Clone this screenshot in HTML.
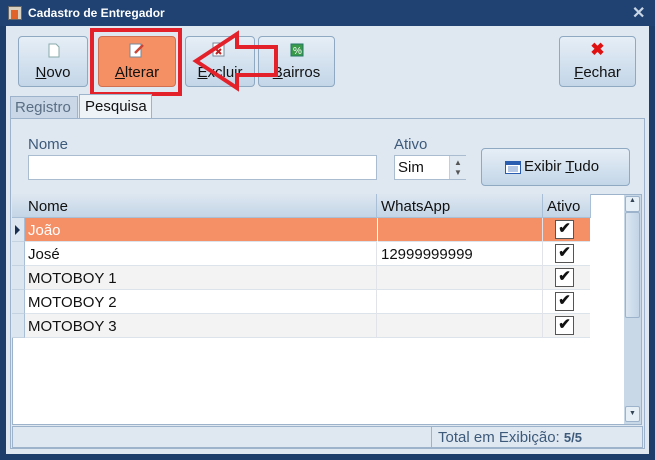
<!DOCTYPE html>
<html><head><meta charset="utf-8"><style>
*{box-sizing:border-box;margin:0;padding:0}
body{width:655px;height:460px;background:#1d3e6b;font-family:"Liberation Sans",sans-serif;position:relative;overflow:hidden}
.a{position:absolute}
.btn{position:absolute;border:1px solid #8fa9c3;border-radius:4px;background:linear-gradient(#e6eef6,#c3d6e8);font-size:15px;color:#111;text-align:center}
.btn span{position:absolute;left:0;right:0;top:27px}
.t{font-size:15px;color:#111}
.lbl{font-size:15px;color:#3d5a7a}
.row{position:absolute;left:25px;width:565px;height:24px;border-bottom:1px solid #dde3ea;font-size:15px;color:#111}
.row div{position:absolute;top:4px}
.row .cb{position:absolute;left:530px;top:2px;width:19px;height:19px;border:1px solid #555;background:#fff;font-size:15px;line-height:16px;text-align:center;font-weight:bold;color:#111}
.ind{position:absolute;left:12px;width:13px;height:24px;background:#dce6f0;border-bottom:1px solid #c5d3e1;border-right:1px solid #a9bfd5}
</style></head><body>
<div class="a" style="left:0;top:0;width:655px;height:26px;background:#1f4272"></div>
<div class="a" style="left:8px;top:6px;width:14px;height:14px;background:#d9d0c0;border:1px solid #666"></div>
<div class="a" style="left:11px;top:10px;width:7px;height:9px;background:#e2632a"></div>
<div class="a" style="left:28px;top:6px;color:#fff;font-size:12px;font-weight:bold">Cadastro de Entregador</div>
<div class="a" style="left:632px;top:3px;color:#c9d6e6;font-size:16px;font-weight:bold">✕</div>
<div class="a" style="left:6px;top:26px;width:643px;height:428px;background:#dfe8f1"></div>

<div class="btn" style="left:18px;top:36px;width:70px;height:51px"><svg class="a" style="left:29px;top:6px" width="12" height="15"><path d="M1 1h7l3 3v10H1z" fill="#fff" stroke="#8aa" /></svg><span><u>N</u>ovo</span></div>
<div class="btn" style="left:98px;top:36px;width:78px;height:51px;background:#f59065;border-color:#d07050"><svg class="a" style="left:30px;top:5px" width="16" height="16"><rect x="1" y="2" width="11" height="13" fill="#fff" stroke="#789"/><path d="M6 11l8-8" stroke="#c43" stroke-width="2.5"/></svg><span><u>A</u>lterar</span></div>
<div class="btn" style="left:185px;top:36px;width:70px;height:51px"><svg class="a" style="left:26px;top:5px" width="14" height="15"><rect x="1" y="1" width="11" height="13" fill="#fff" stroke="#789"/><path d="M4 7l5 5M9 7l-5 5" stroke="#b22" stroke-width="2"/></svg><span><u>E</u>xcluir</span></div>
<div class="btn" style="left:258px;top:36px;width:77px;height:51px"><svg class="a" style="left:31px;top:6px" width="14" height="14"><rect x="1" y="1" width="12" height="12" fill="#3a9a4a" stroke="#276"/><text x="3" y="11" font-size="10" fill="#fff" font-family="Liberation Sans">%</text></svg><span><u>B</u>airros</span></div>
<div class="btn" style="left:559px;top:36px;width:77px;height:51px"><div class="a" style="left:0;right:0;top:3px;color:#e01010;font-size:17px;font-weight:bold">✖</div><span><u>F</u>echar</span></div>

<div class="a" style="left:90px;top:28px;width:92px;height:68px;border:4px solid #e3212b"></div>
<svg class="a" style="left:190px;top:30px" width="92" height="62"><path d="M6 31L47 4V17H86V45H47V58Z" fill="none" stroke="#e3212b" stroke-width="4"/></svg>

<div class="a" style="left:10px;top:96px;width:68px;height:23px;background:#c9d7e6;border:1px solid #9db3cb;border-bottom:none"><div class="a lbl" style="left:4px;top:2px;color:#5a6e85">Registro</div></div>
<div class="a" style="left:79px;top:94px;width:73px;height:25px;background:#eef3f8;border:1px solid #9db3cb;border-bottom:none"><div class="a t" style="left:5px;top:3px">Pesquisa</div></div>
<div class="a" style="left:10px;top:118px;width:635px;height:331px;border:1px solid #9db3cb;background:#dfe8f1"></div>

<div class="a lbl" style="left:28px;top:136px">Nome</div>
<div class="a" style="left:28px;top:155px;width:349px;height:25px;background:#fff;border:1px solid #a9bcd0"></div>
<div class="a lbl" style="left:394px;top:136px">Ativo</div>
<div class="a" style="left:394px;top:155px;width:72px;height:25px;background:#fff;border:1px solid #a9bcd0"><div class="a t" style="left:3px;top:3px">Sim</div><div class="a" style="left:54px;top:0;width:17px;height:23px;background:#dfe8f1;border-left:1px solid #c0cfdd;font-size:8px;color:#555;text-align:center;line-height:10px;padding-top:2px">▲<br>▼</div></div>
<div class="btn" style="left:481px;top:148px;width:149px;height:38px"><svg class="a" style="left:23px;top:12px" width="16" height="13"><rect x="0.5" y="0.5" width="15" height="12" fill="#fff" stroke="#2a5db0"/><rect x="1" y="1" width="14" height="3" fill="#2a5db0"/><path d="M3 6h10M3 8h10M3 10h10" stroke="#6a8fc8"/></svg><span style="top:9px;left:42px;text-align:left">Exibir <u>T</u>udo</span></div>

<div class="a" style="left:12px;top:194px;width:630px;height:231px;background:#fff;border:1px solid #9db3cb"></div>
<div class="a" style="left:12px;top:194px;width:579px;height:24px;background:linear-gradient(#dde7f1,#c4d5e6);border-bottom:1px solid #a9bfd5"></div>
<div class="a t" style="left:28px;top:198px">Nome</div>
<div class="a" style="left:376px;top:194px;width:1px;height:24px;background:#a9bfd5"></div>
<div class="a t" style="left:381px;top:198px">WhatsApp</div>
<div class="a" style="left:542px;top:194px;width:1px;height:24px;background:#a9bfd5"></div>
<div class="a t" style="left:547px;top:198px">Ativo</div>
<div class="a" style="left:590px;top:194px;width:1px;height:24px;background:#a9bfd5"></div>

<div class="ind" style="top:218px"><div class="a" style="left:3px;top:7px;width:0;height:0;border-left:5px solid #1a3050;border-top:5px solid transparent;border-bottom:5px solid transparent"></div></div>
<div class="row" style="top:218px;background:#f58f66;color:#fff"><div style="left:3px">João</div><div class="a" style="left:352px;top:0;width:1px;height:24px;background:#fff"></div><div class="cb">✔</div></div>
<div class="ind" style="top:242px"></div>
<div class="row" style="top:242px;background:#fff"><div style="left:3px">José</div><div style="left:356px">12999999999</div><div class="cb">✔</div></div>
<div class="ind" style="top:266px"></div>
<div class="row" style="top:266px;background:#f3f3f3"><div style="left:3px">MOTOBOY 1</div><div class="cb">✔</div></div>
<div class="ind" style="top:290px"></div>
<div class="row" style="top:290px;background:#fff"><div style="left:3px">MOTOBOY 2</div><div class="cb">✔</div></div>
<div class="ind" style="top:314px"></div>
<div class="row" style="top:314px;background:#f3f3f3"><div style="left:3px">MOTOBOY 3</div><div class="cb">✔</div></div>
<div class="a" style="left:376px;top:242px;width:1px;height:96px;background:#e0e4ea"></div>
<div class="a" style="left:542px;top:218px;width:1px;height:120px;background:#e0e4ea"></div>

<div class="a" style="left:624px;top:195px;width:17px;height:229px;background:#c9d8e7"></div>
<div class="a" style="left:625px;top:196px;width:15px;height:16px;background:#e6eef6;border:1px solid #9db3cb;border-radius:2px;font-size:7px;text-align:center;color:#345">▲</div>
<div class="a" style="left:625px;top:212px;width:15px;height:106px;background:linear-gradient(90deg,#dbe6f1,#c2d4e6);border:1px solid #9db3cb;border-radius:2px"></div>
<div class="a" style="left:625px;top:406px;width:15px;height:16px;background:#e6eef6;border:1px solid #9db3cb;border-radius:2px;font-size:7px;text-align:center;color:#345;line-height:14px">▼</div>

<div class="a" style="left:12px;top:426px;width:631px;height:22px;border:1px solid #9db3cb;background:#dfe8f1"></div>
<div class="a" style="left:431px;top:426px;width:1px;height:22px;background:#9db3cb"></div>
<div class="a lbl" style="left:438px;top:429px">Total em Exibição: <b style="font-size:13px">5/5</b></div>
</body></html>
